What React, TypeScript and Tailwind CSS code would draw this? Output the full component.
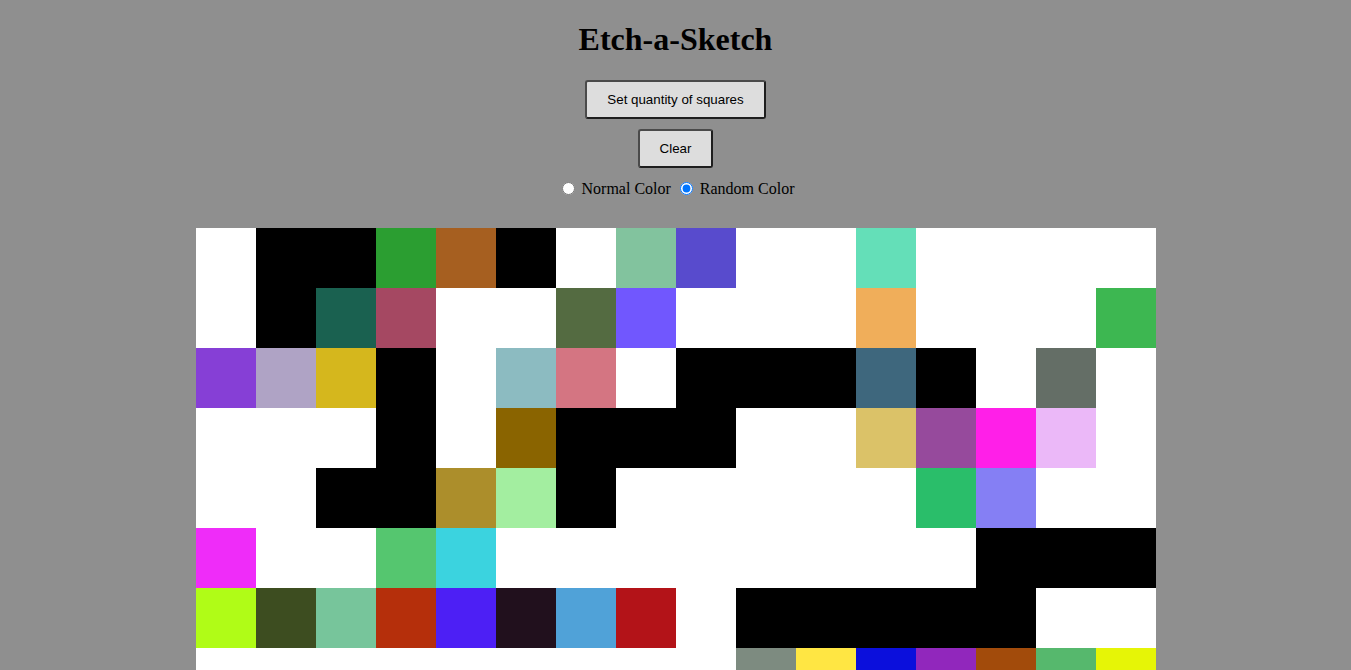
import { useState } from "react";

const W = "#ffffff";
const K = "#000000";

// rows as seen on the board, the rest of the 16x16 board is untouched (white)
const painted: string[][] = [
  [W, K, K, "#2b9e31", "#a65f20", K, W, "#82c39e", "#584bcd", W, W, "#64dfb8", W, W, W, W],
  [W, K, "#1a6150", "#a54862", W, W, "#546b41", "#7157fe", W, W, W, "#f0ae5a", W, W, W, "#3db751"],
  ["#863fd6", "#afa3c5", "#d5b71d", K, W, "#8cbbc1", "#d47582", W, K, K, K, "#3e677d", K, W, "#646e66", W],
  [W, W, W, K, W, "#8a6400", K, K, K, W, W, "#dbc268", "#964a9c", "#ff1fe8", "#ebb8f8", W],
  [W, W, K, K, "#ac8e2b", "#a3eea0", K, W, W, W, W, W, "#2abe6a", "#857ff4", W, W],
  ["#ef2cf9", W, W, "#55c66f", "#3bd3df", W, W, W, W, W, W, W, W, K, K, K],
  ["#b0fc17", "#3d4d20", "#77c59b", "#b52f0b", "#4d1ff5", "#21101d", "#50a2d8", "#b31318", W, K, K, K, K, K, W, W],
  [W, W, W, W, W, W, W, W, W, "#7d8b80", "#ffe643", "#0b0fdc", "#9127bc", "#a24b0b", "#56b86d", "#e6f506"],
];

const SIZE = 16;

function buildBoard(): string[] {
  const cells: string[] = [];
  for (let r = 0; r < SIZE; r++) {
    for (let c = 0; c < SIZE; c++) {
      cells.push(painted[r]?.[c] ?? W);
    }
  }
  return cells;
}

export default function App() {
  const [mode, setMode] = useState<"normal" | "random">("random");
  const [cells] = useState<string[]>(buildBoard);

  return (
    <div className="min-h-screen bg-[#8f8f8f] flex flex-col items-center font-['Liberation_Serif',serif] text-black">
      <h1 className="mt-[21px] mb-[23px] text-[32px] font-bold leading-[36px]">
        Etch-a-Sketch
      </h1>

      <button className="h-[39px] px-5 bg-[#dddddd] border-2 border-[#4a4a4a] border-r-[#1e1e1e] border-b-[#1e1e1e] rounded-[3px] text-[13.33px] font-['Liberation_Sans',Arial,sans-serif] text-black">
        Set quantity of squares
      </button>

      <button className="mt-[10px] h-[39px] px-5 bg-[#dddddd] border-2 border-[#4a4a4a] border-r-[#1e1e1e] border-b-[#1e1e1e] rounded-[3px] text-[13.33px] font-['Liberation_Sans',Arial,sans-serif] text-black">
        Clear
      </button>

      <div className="mt-[12px] flex items-center text-base leading-[18px]">
        <label className="flex items-center">
          <input
            type="radio"
            name="mode"
            checked={mode === "normal"}
            onChange={() => setMode("normal")}
            className="w-[13px] h-[13px] ml-[5px] mr-[7px] mt-[-2px]"
          />
          Normal Color
        </label>
        <label className="flex items-center ml-[4px]">
          <input
            type="radio"
            name="mode"
            checked={mode === "random"}
            onChange={() => setMode("random")}
            className="w-[13px] h-[13px] ml-[5px] mr-[7px] mt-[-2px]"
          />
          Random Color
        </label>
      </div>

      {/* Board */}
      <div className="mt-[30px] w-[960px] h-[960px] grid grid-cols-16">
        {cells.map((color, i) => (
          <div key={i} className="w-[60px] h-[60px]" style={{ backgroundColor: color }} />
        ))}
      </div>
    </div>
  );
}
